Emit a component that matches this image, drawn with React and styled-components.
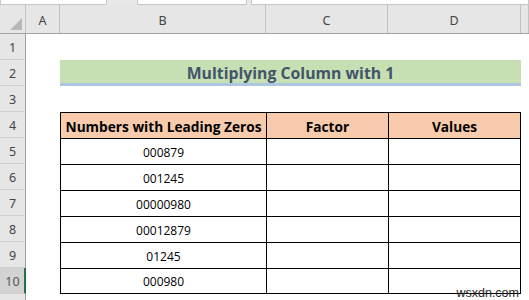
import { createGlobalStyle, styled } from 'styled-components'

const GlobalStyle = createGlobalStyle`
    html, body {
        margin: 0;
        padding: 0;
        background: #fff;
    }
`

const COLS = [
    { key: 'A', width: 34 },
    { key: 'B', width: 206 },
    { key: 'C', width: 122 },
    { key: 'D', width: 133 },
]

const VALUES = ['000879', '001245', '00000980', '00012879', '01245', '000980']

const Sheet = styled.div`
    position: relative;
    width: 529px;
    height: 300px;
    overflow: hidden;
    display: flex;
    flex-direction: column;
    background: #fff;
`

const TopBar = styled.div`
    display: flex;
    height: 5px;
    background: #e9e9e9;
    flex-shrink: 0;
`

const InputBox = styled.div`
    width: ${props => props.$w}px;
    margin-left: ${props => props.$ml || 0}px;
    background: #fff;
    border: 1px solid #c6c6c6;
    border-top: none;
    box-sizing: border-box;
    flex: ${props => props.$grow ? 1 : 'none'};
`

const HeaderRow = styled.div`
    display: flex;
    height: 29px;
    flex-shrink: 0;
    background: #e6e6e6;
    border-bottom: 1px solid #9f9f9f;
    box-sizing: border-box;
`

const Corner = styled.div`
    position: relative;
    width: 26px;
    flex: none;
    border-right: 1px solid #c2c2c2;
    box-sizing: border-box;
    &::after {
        content: '';
        position: absolute;
        right: 3px;
        bottom: 3px;
        width: 0;
        height: 0;
        border-left: 12px solid transparent;
        border-bottom: 12px solid #b8b8b8;
    }
`

const ColHeader = styled.div`
    width: ${props => props.$w}px;
    flex: ${props => props.$grow ? 1 : 'none'};
    border-right: 1px solid #c2c2c2;
    box-sizing: border-box;
    display: flex;
    align-items: center;
    justify-content: center;
    padding-top: 2px;
    font-family: "Noto Sans", "Open Sans", sans-serif;
    font-size: 12.5px;
    color: #444;
`

const Row = styled.div`
    display: flex;
    height: 26px;
    flex-shrink: 0;
`

const RowHeader = styled.div`
    width: 26px;
    flex: none;
    background: ${props => props.$selected ? '#d3d3d3' : '#e6e6e6'};
    border-right: ${props => props.$selected ? '2px solid #217346' : '1px solid #9f9f9f'};
    border-bottom: 1px solid #d0d0d0;
    box-sizing: border-box;
    display: flex;
    align-items: center;
    justify-content: center;
    padding-top: 2px;
    padding-left: ${props => props.$selected ? '1px' : '0'};
    font-family: "Noto Sans", "Open Sans", sans-serif;
    font-size: 12.5px;
    color: ${props => props.$selected ? '#555' : '#444'};
`

const Cell = styled.div`
    width: ${props => props.$w}px;
    flex: ${props => props.$grow ? 1 : 'none'};
    box-sizing: border-box;
`

const Title = styled.div`
    width: 461px;
    flex: none;
    box-sizing: border-box;
    background: #c6e0b4;
    border-bottom: 3px solid #aec6e2;
    display: flex;
    align-items: center;
    justify-content: center;
    padding-top: 2px;
    font-family: "Open Sans", sans-serif;
    font-weight: 700;
    font-size: 15.8px;
    color: #44546a;
`

const TableCell = styled.div`
    width: ${props => props.$w}px;
    flex: none;
    box-sizing: border-box;
    background: ${props => props.$head ? '#f8cbad' : '#fff'};
    border-top: 1px solid #000;
    border-left: 1px solid #000;
    border-right: ${props => props.$lastCol ? '1px solid #000' : 'none'};
    border-bottom: ${props => props.$lastRow ? '1px solid #000' : 'none'};
    display: flex;
    align-items: center;
    justify-content: center;
    padding-top: 1px;
    font-family: "Open Sans", sans-serif;
    font-weight: ${props => props.$head ? 700 : 400};
    font-size: ${props => props.$head ? '13.7px' : '12px'};
    color: #000;
    white-space: nowrap;
`

const Watermark = styled.div`
    position: absolute;
    right: 10px;
    bottom: 1px;
    font-family: "Liberation Sans", Arial, sans-serif;
    font-size: 12.5px;
    line-height: 12px;
    color: #2a2a2a;
`

function BlankRow({ n, selected }) {
    return (
        <Row>
            <RowHeader $selected={selected}>{n}</RowHeader>
            {COLS.map(c => <Cell key={c.key} $w={c.width} />)}
            <Cell $grow />
        </Row>
    )
}

function TableRow({ n, cells, head, last }) {
    return (
        <Row>
            <RowHeader $selected={n === 10}>{n}</RowHeader>
            <Cell $w={34} />
            {cells.map((text, i) => (
                <TableCell
                    key={i}
                    $w={COLS[i + 1].width}
                    $head={head}
                    $lastCol={i === 2}
                    $lastRow={last}
                >
                    {text}
                </TableCell>
            ))}
            <Cell $grow />
        </Row>
    )
}

export default function App() {
    return (
        <>
            <GlobalStyle />
            <Sheet>
                <TopBar>
                    <InputBox $w={107} />
                    <InputBox $w={110} $ml={30} />
                    <InputBox $ml={4} $grow />
                </TopBar>
                <HeaderRow>
                    <Corner />
                    {COLS.map(c => <ColHeader key={c.key} $w={c.width}>{c.key}</ColHeader>)}
                    <ColHeader $grow />
                </HeaderRow>
                <BlankRow n={1} />
                <Row>
                    <RowHeader>2</RowHeader>
                    <Cell $w={34} />
                    <Title>Multiplying Column with 1</Title>
                    <Cell $grow />
                </Row>
                <BlankRow n={3} />
                <TableRow n={4} head cells={['Numbers with Leading Zeros', 'Factor', 'Values']} />
                {VALUES.map((v, i) => (
                    <TableRow key={v} n={i + 5} cells={[v, '', '']} last={i === VALUES.length - 1} />
                ))}
                <BlankRow n="" />
                <Watermark>wsxdn.com</Watermark>
            </Sheet>
        </>
    )
}
